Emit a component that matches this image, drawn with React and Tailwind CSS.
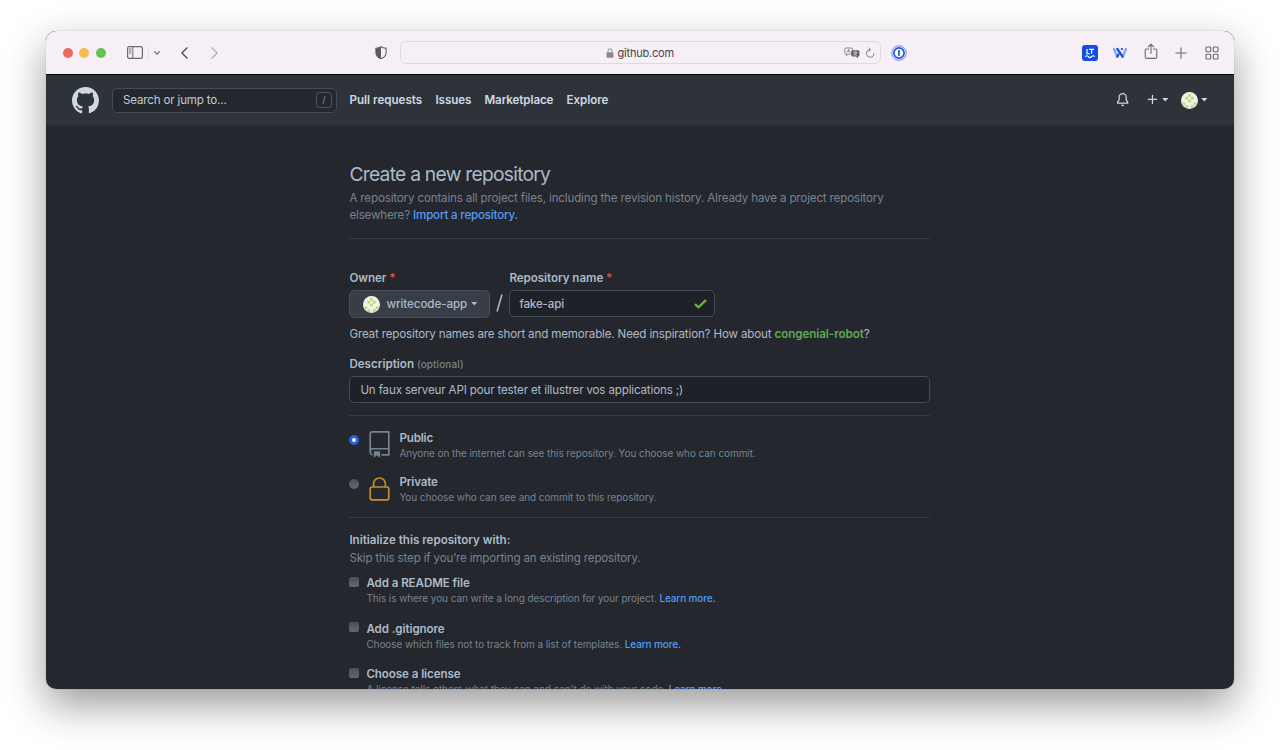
import React from "react";

const GITHUB_MARK =
  "M8 0C3.58 0 0 3.58 0 8c0 3.54 2.29 6.53 5.47 7.59.4.07.55-.17.55-.38 0-.19-.01-.82-.01-1.49-2.01.37-2.53-.49-2.69-.94-.09-.23-.48-.94-.82-1.13-.28-.15-.68-.52-.01-.53.63-.01 1.08.58 1.23.82.72 1.21 1.87.87 2.33.66.07-.52.28-.87.51-1.07-1.78-.2-3.64-.89-3.64-3.95 0-.87.31-1.59.82-2.15-.08-.2-.36-1.02.08-2.12 0 0 .67-.21 2.2.82.64-.18 1.32-.27 2-.27.68 0 1.36.09 2 .27 1.53-1.04 2.2-.82 2.2-.82.44 1.1.16 1.92.08 2.12.51.56.82 1.27.82 2.15 0 3.07-1.87 3.75-3.65 3.95.29.25.54.73.54 1.48 0 1.07-.01 1.93-.01 2.2 0 .21.15.46.55.38A8.013 8.013 0 0016 8c0-4.42-3.58-8-8-8z";
const BELL = [
  "M8 16a2 2 0 001.985-1.75c.017-.137-.097-.25-.235-.25h-3.5c-.138 0-.252.113-.235.25A2 2 0 008 16z",
  "M8 1.5A3.5 3.5 0 004.5 5v2.947c0 .346-.102.683-.294.97l-1.703 2.556a.018.018 0 00-.003.01l.001.006c0 .002.002.004.004.006a.017.017 0 00.006.004l.007.001h10.964l.007-.001a.016.016 0 00.006-.004.016.016 0 00.004-.006l.001-.007a.017.017 0 00-.003-.01l-1.703-2.554a1.75 1.75 0 01-.294-.97V5A3.5 3.5 0 008 1.5zM3 5a5 5 0 0110 0v2.947c0 .05.015.098.042.139l1.703 2.555A1.518 1.518 0 0113.482 13H2.518a1.518 1.518 0 01-1.263-2.36l1.703-2.554A.25.25 0 003 7.947V5z",
];
const PLUS =
  "M7.75 2a.75.75 0 01.75.75V7h4.25a.75.75 0 110 1.5H8.5v4.25a.75.75 0 11-1.5 0V8.5H2.75a.75.75 0 010-1.5H7V2.75A.75.75 0 017.75 2z";
const REPO = [
  "M3 2.75A2.75 2.75 0 015.75 0h14.5a.75.75 0 01.75.75v20.5a.75.75 0 01-.75.75h-6a.75.75 0 010-1.5h5.25v-4H6A1.5 1.5 0 004.5 18v.75c0 .716.43 1.334 1.05 1.605a.75.75 0 01-.6 1.374A3.25 3.25 0 013 18.75v-16zM19.5 1.5V15H6c-.546 0-1.059.146-1.5.401V2.75c0-.69.56-1.25 1.25-1.25H19.5z",
  "M7 18.25a.25.25 0 01.25-.25h5a.25.25 0 01.25.25v5.01a.25.25 0 01-.397.201l-2.206-1.604a.25.25 0 00-.294 0L7.397 23.46a.25.25 0 01-.397-.2v-5.01z",
];
const LOCK = [
  "M6 9V7.25C6 3.845 8.503 1 12 1s6 2.845 6 6.25V9h.5a2.5 2.5 0 012.5 2.5v8a2.5 2.5 0 01-2.5 2.5h-13A2.5 2.5 0 013 19.5v-8A2.5 2.5 0 015.5 9H6zm1.5-1.75C7.5 4.58 9.422 2.5 12 2.5c2.578 0 4.5 2.08 4.5 4.75V9h-9V7.25zm-3 4.25a1 1 0 011-1h13a1 1 0 011 1v8a1 1 0 01-1 1h-13a1 1 0 01-1-1v-8z",
];

function Icon({ paths, box = 16, className }) {
  return (
    <svg viewBox={`0 0 ${box} ${box}`} className={`shrink-0 ${className}`} fill="currentColor" fillRule="evenodd">
      {paths.map((d) => (
        <path key={d} d={d} />
      ))}
    </svg>
  );
}

function Stroke({ box, className, width = 1.2, children }) {
  return (
    <svg viewBox={box} className={`shrink-0 ${className}`} fill="none" stroke="currentColor" strokeWidth={width} strokeLinecap="round" strokeLinejoin="round">
      {children}
    </svg>
  );
}

function Caret() {
  return (
    <svg viewBox="0 0 7 4" className="h-[3.5px] w-[6.5px] shrink-0" fill="currentColor">
      <path d="M0 0h7L3.500 4z" />
    </svg>
  );
}

const AVATAR_CELLS = [[2, 0], [1, 1], [3, 1], [2, 2], [0, 3], [4, 3], [1, 4], [3, 4]];

function Avatar() {
  return (
    <svg viewBox="0 0 17 17" className="size-[17px] shrink-0 rounded-full">
      <rect width="17" height="17" fill="#f1f2ee" />
      {AVATAR_CELLS.map(([x, y]) => (
        <rect key={`${x}-${y}`} x={1.5 + x * 2.8} y={2 + y * 2.8} width="2.8" height="2.8" fill="#c0da6c" />
      ))}
    </svg>
  );
}

function Toolbar() {
  return (
    <div className="flex h-[44px] shrink-0 items-center border-b border-[#050607] bg-[#f6f0f6] pl-[16.5px] text-[#6d676e]">
      <div className="flex w-[64.5px] items-center gap-[6.5px]">
        <span className="size-[10px] rounded-full bg-[#ec6a5e]" />
        <span className="size-[10px] rounded-full bg-[#f4bd4f]" />
        <span className="size-[10px] rounded-full bg-[#61c454]" />
      </div>
      <Stroke box="0 0 16 13" className="h-[13px] w-[16px]">
        <rect x=".6" y=".6" width="14.800" height="11.800" rx="1.600" />
        <path d="M5.800 .6v11.800M2.300 3h1.600M2.300 5h1.600M2.300 7h1.600" strokeWidth="1" />
      </Stroke>
      <span className="ml-[5px] h-[14px] w-px bg-[#e8e2e8]" />
      <Stroke box="0 0 6 4" className="ml-[5px] h-[4px] w-[6px]">
        <path d="M.6 .6 3 3.200 5.400 .6" />
      </Stroke>
      <Stroke box="0 0 7 12" className="ml-[21px] h-[12px] w-[7px] text-[#4b464c]" width={1.2}>
        <path d="M6.200 .8 .9 6l5.300 5.200" />
      </Stroke>
      <Stroke box="0 0 7 12" className="ml-[22.500px] h-[12px] w-[7px] text-[#b2acb3]" width={1.2}>
        <path d="M.8 .8 6.100 6 .8 11.200" />
      </Stroke>
      <svg viewBox="0 0 12 14" className="ml-[157px] h-[13.5px] w-[12px] shrink-0">
        <path d="M6 .7C4.700 1.800 2.700 2.300 .7 2.400V7c0 3 2.300 5 5.300 6.300C9 12 11.300 10 11.300 7V2.400C9.300 2.300 7.300 1.800 6 .7z" fill="none" stroke="#5f5960" strokeWidth="1.100" />
        <path d="M6 .7C4.700 1.800 2.700 2.300 .7 2.400V7c0 3 2.300 5 5.300 6.300z" fill="#5f5960" />
      </svg>
      <div className="ml-[13px] flex h-[23px] w-[481px] shrink-0 items-center rounded-[6px] border border-[#e0dae0] pl-[205px]">
        <svg viewBox="0 0 8 10" className="h-[10px] w-[8px] shrink-0 text-[#8d878e]">
          <rect x=".5" y="4.300" width="7" height="5.500" rx="1" fill="currentColor" />
          <path d="M2 4.500V2.800a2 2 0 014 0v1.700" fill="none" stroke="currentColor" />
        </svg>
        <span className="ml-[4px] w-[58px] pt-[1px] text-[11px] leading-[22px] whitespace-nowrap text-[#47424a] tracking-[-0.2px]">github.com</span>
        <svg viewBox="0 0 16 12" className="ml-[168.500px] h-[12px] w-[16px] shrink-0">
          <path d="M2 1h5.500a1.200 1.200 0 011.200 1.200v3.600A1.200 1.200 0 017.500 7H4.200L2.500 8.700V7H2A1.200 1.200 0 01.8 5.800V2.200A1.200 1.200 0 012 1z" fill="none" stroke="#817b82" strokeWidth=".9" />
          <path d="M3.200 5.600 4.700 2.200l1.500 3.400M3.700 4.600h2" fill="none" stroke="#817b82" strokeWidth=".8" />
          <path d="M8.700 3.200H14a1.400 1.400 0 011.400 1.400v3.600A1.400 1.400 0 0114 9.600v1.700L12 9.600H8.700a1.400 1.400 0 01-1.400-1.400V4.600a1.400 1.400 0 011.400-1.400z" fill="#5f5960" />
          <path d="M9.300 5.200h4M11.300 4.300v.9M12.700 5.300c-.4 1.400-1.600 2.500-3.200 3M9.900 5.900c.5 1.100 1.600 2 3.100 2.400" fill="none" stroke="#f6f0f6" strokeWidth=".7" />
        </svg>
        <Stroke box="0 0 10 12" className="ml-[5px] h-[11.500px] w-[10px] text-[#817b82]" width={1}>
          <path d="M5.200 2.900a3.900 3.900 0 103.900 3.900M5.200 2.900 3.900 1M5.200 2.900 3.700 4.600" />
        </Stroke>
      </div>
      <svg viewBox="0 0 16 16" className="ml-[10.500px] size-[16px] shrink-0">
        <circle cx="8" cy="8" r="7.300" fill="none" stroke="#5b82e4" strokeWidth=".9" />
        <circle cx="8" cy="8" r="5.100" fill="#fff" stroke="#1d55dc" strokeWidth="1.700" />
        <rect x="7.100" y="5" width="1.800" height="6" rx=".8" fill="#1d55dc" />
      </svg>
      <svg viewBox="0 0 16 16" className="ml-[175px] size-[16px] shrink-0">
        <rect width="16" height="16" rx="3" fill="#144fdb" />
        <path d="M5 4v4.600h2.600M7.200 4.400h4.800M9.600 4.400v4.400M3.300 11.700c1.200-1.300 2-1.300 3.100 0s1.900 1.300 3.100 0 2-1.300 3.200 0" fill="none" stroke="#fff" strokeWidth="1.200" />
      </svg>
      <svg viewBox="0 0 16 12" className="ml-[14px] h-[12px] w-[16px] shrink-0" fill="none" strokeLinecap="round">
        <path d="M2 1.900 5.200 9.500M14 1.900 10.800 9.500" stroke="#83a5ee" strokeWidth="2.400" />
        <path d="M5.400 2 10.600 9.600" stroke="#1b4fd6" strokeWidth="2.300" />
        <path d="M9.900 2.100h.1M5.300 9.500 6.500 7.400" stroke="#1b4fd6" strokeWidth="2.300" />
      </svg>
      <Stroke box="0 0 14 17" className="mb-[2px] ml-[15.500px] h-[17px] w-[14px]" width={1.1}>
        <path d="M4.600 6H2.800A1.600 1.600 0 001.200 7.600v6.200a1.600 1.600 0 001.600 1.600h8.400a1.600 1.600 0 001.600-1.600V7.600A1.600 1.600 0 0011.200 6H9.400M7 10.300V1.200M4.300 3.800 7 1.100l2.700 2.700" />
      </Stroke>
      <Stroke box="0 0 12 12" className="ml-[17px] size-[12px]" width={1.1}>
        <path d="M6 .8v10.400M.8 6h10.400" />
      </Stroke>
      <Stroke box="0 0 14 14" className="ml-[18px] size-[14px]" width={1.1}>
        <rect x="1" y="1" width="4.700" height="4.700" rx=".8" />
        <rect x="8.300" y="1" width="4.700" height="4.700" rx=".8" />
        <rect x="1" y="8.300" width="4.700" height="4.700" rx=".8" />
        <rect x="8.300" y="8.300" width="4.700" height="4.700" rx=".8" />
      </Stroke>
    </div>
  );
}

function Header() {
  return (
    <header className="flex h-[51px] shrink-0 items-center border-b border-[#272b32] bg-[#2e333a] pr-[27px] pl-[26px] text-[11.6px] text-[#cdd9e5]">
      <Icon paths={[GITHUB_MARK]} className="size-[27px]" />
      <div className="ml-[13px] flex h-[25px] w-[225px] items-center justify-between rounded-[5px] border border-[#444b54] bg-[#23272e] pr-[4px] pl-[10px]">
        <span className="pt-[2px] tracking-[-0.18px] text-[#c5cbd2]">Search or jump to...</span>
        <span className="flex h-[16px] w-[16px] items-center justify-center rounded-[3px] border border-[#4d545e] text-[9.5px] text-[#8d96a0]">/</span>
      </div>
      <nav className="ml-[12.500px] flex grow pt-[2px] font-semibold">
        <a className="w-[86px] whitespace-nowrap">Pull requests</a>
        <a className="w-[49px] whitespace-nowrap tracking-[-0.1px]">Issues</a>
        <a className="w-[82px] whitespace-nowrap tracking-[-0.1px]">Marketplace</a>
        <a className="whitespace-nowrap tracking-[-0.05px]">Explore</a>
      </nav>
      <Icon paths={BELL} className="mr-[17px] size-[13.3px]" />
      <Icon paths={[PLUS]} className="mr-[2px] size-[13.3px]" />
      <Caret />
      <div className="w-[13px]" />
      <Avatar />
      <div className="w-[2.500px]" />
      <Caret />
    </header>
  );
}

function Choice({ on, icon, title, text }) {
  return (
    <div className="flex h-[44.500px]">
      {on ? (
        <span className="mt-[5.500px] flex size-[10px] shrink-0 items-center justify-center rounded-full bg-[#2463df]">
          <span className="size-[4px] rounded-full bg-white" />
        </span>
      ) : (
        <span className="mt-[5.500px] size-[10px] shrink-0 rounded-full bg-linear-to-b from-[#4c4f53] to-[#65686b]" />
      )}
      <div className="ml-[7px] w-[33px] pt-[2px]">{icon}</div>
      <div className="whitespace-nowrap">
        <div className="pt-[0.500px] text-[11.6px] leading-[17px] font-semibold text-[#adbac7]">{title}</div>
        <div className="text-[10px] leading-[12px] tracking-[-0.08px] text-[#768390]">{text}</div>
      </div>
    </div>
  );
}

function Option({ title, text, link }) {
  return (
    <div className="flex h-[45.500px]">
      <span className="mt-[1.500px] size-[10px] shrink-0 rounded-[2px] bg-linear-to-b from-[#4c4f53] to-[#65686b]" />
      <div className="ml-[7px] whitespace-nowrap">
        <div className="text-[11.6px] leading-[17px] font-semibold tracking-[-0.08px] text-[#adbac7]">{title}</div>
        <div className="text-[10px] leading-[13px] tracking-[-0.08px] text-[#768390]">
          {text} <a className="font-medium tracking-[-0.14px] text-[#539bf5]">{link}</a>
        </div>
      </div>
    </div>
  );
}

function Required() {
  return <span className="text-[#e5534b]">*</span>;
}

export default function App() {
  return (
    <div className="h-[750px] w-[1280px] overflow-hidden bg-white pt-[31px] pl-[46px] font-['Inter','Liberation_Sans',sans-serif]">
      <div className="h-[658px] w-[1188px] rounded-[10px] shadow-[0_16px_42px_rgba(0,0,0,0.4),0_0_1px_rgba(0,0,0,0.4)]">
        <div className="flex h-full flex-col overflow-hidden rounded-[10px] bg-[#24272e]">
          <Toolbar />
          <Header />
          <main className="ml-[303.400px] w-[581px] pt-[36px] text-[11.6px] leading-[17px] tracking-[-0.16px] text-[#adbac7]">
            <h1 className="h-[24px] text-[19.300px] leading-[24px] whitespace-nowrap tracking-[-0.76px]">Create a new repository</h1>
            <p className="mt-[4px] whitespace-nowrap text-[#768390]">
              A repository contains all project files, including the revision history. Already have a project repository
              <br />
              elsewhere? <a className="font-medium tracking-[-0.200px] text-[#539bf5]">Import a repository.</a>
            </p>
            <div className="mt-[14px] h-px bg-[#373c44]" />
            <div className="mt-[31px] flex h-[48px]">
              <div className="w-[141px]">
                <div className="font-semibold tracking-[-0.05px]">Owner <Required /></div>
                <div className="mt-[3px] flex h-[28px] items-center rounded-[5px] border border-[#444c56] bg-[#373e47] pl-[13px]">
                  <Avatar />
                  <span className="mr-[4px] ml-[6px] whitespace-nowrap font-medium tracking-[-0.080px]">writecode-app</span>
                  <Caret />
                </div>
              </div>
              <div className="flex w-[19px] justify-center pt-[24px]">
                <svg viewBox="0 0 7 18" className="h-[18px] w-[7px]" stroke="currentColor" strokeWidth="1.500">
                  <path d="M6 .5 1 17.500" />
                </svg>
              </div>
              <div className="w-[206px]">
                <div className="font-semibold tracking-[-0.05px]">Repository name <Required /></div>
                <div className="mt-[3px] flex h-[27px] items-center justify-between rounded-[5px] border border-[#444c56] bg-[#1e2127] pr-[7px] pl-[9px]">
                  <span className="pt-[1px] font-medium">fake-api</span>
                  <svg viewBox="0 0 13 10" className="h-[10px] w-[13px]" fill="none" stroke="#6bb544" strokeWidth="2.300">
                    <path d="M1 5.200 4.500 8.300 12 1.200" />
                  </svg>
                </div>
              </div>
            </div>
            <p className="mt-[8px] whitespace-nowrap">
              Great repository names are short and memorable. Need inspiration? How about <b className="font-semibold tracking-[-0.050px] text-[#61a953]">congenial-robot</b>?
            </p>
            <div className="mt-[13px] font-semibold tracking-normal">
              Description <span className="text-[10px] font-medium tracking-[0.100px] text-[#768390]">(optional)</span>
            </div>
            <div className="mt-[3px] flex h-[27px] items-center rounded-[5px] border border-[#444c56] bg-[#1e2127] pt-[1px] pl-[10px] whitespace-nowrap">
              Un faux serveur API pour tester et illustrer vos applications ;)
            </div>
            <div className="mt-[12px] h-px bg-[#373c44]" />
            <div className="h-[101px] pt-[13px]">
              <Choice
                on
                icon={<Icon paths={REPO} box={24} className="size-[27px] text-[#768390]" />}
                title="Public"
                text="Anyone on the internet can see this repository. You choose who can commit."
              />
              <Choice
                icon={<Icon paths={LOCK} box={24} className="size-[27px] text-[#c69026]" />}
                title="Private"
                text="You choose who can see and commit to this repository."
              />
            </div>
            <div className="h-px bg-[#373c44]" />
            <div className="mt-[14px] font-semibold tracking-normal">Initialize this repository with:</div>
            <p className="mt-[0.500px] mb-[8.500px] text-[#768390]">Skip this step if you’re importing an existing repository.</p>
            <Option title="Add a README file" text="This is where you can write a long description for your project." link="Learn more." />
            <Option title="Add .gitignore" text="Choose which files not to track from a list of templates." link="Learn more." />
            <Option title="Choose a license" text="A license tells others what they can and can't do with your code." link="Learn more." />
          </main>
        </div>
      </div>
    </div>
  );
}
